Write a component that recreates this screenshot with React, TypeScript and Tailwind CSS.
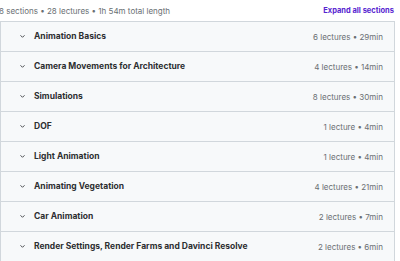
const sections = [
  { title: "Animation Basics", meta: "6 lectures • 29min" },
  { title: "Camera Movements for Architecture", meta: "4 lectures • 14min" },
  { title: "Simulations", meta: "8 lectures • 30min" },
  { title: "DOF", meta: "1 lecture • 4min" },
  { title: "Light Animation", meta: "1 lecture • 4min" },
  { title: "Animating Vegetation", meta: "4 lectures • 21min" },
  { title: "Car Animation", meta: "2 lectures • 7min" },
  { title: "Render Settings, Render Farms and Davinci Resolve", meta: "2 lectures • 6min" },
]

function Chevron() {
  return (
    <svg width="7" height="5" viewBox="0 0 7 5" className="shrink-0">
      <path d="M1.5 1.3 L3.5 3.3 L5.5 1.3" fill="none" stroke="#4a4d50" strokeWidth="1" />
    </svg>
  )
}

export default function App() {
  return (
    <div className="w-[400px] h-[261px] overflow-hidden bg-white font-['Inter',sans-serif] text-[#2d2f31]">
      <div className="flex items-center justify-between h-[21px] pr-[6px] -ml-[1px]">
        <span className="text-[8px] text-[#6a6f73]">8 sections • 28 lectures • 1h 54m total length</span>
        <span className="text-[7.5px] font-bold text-[#5624d0]">Expand all sections</span>
      </div>
      <div className="w-[395px] border border-[#d1d7dc] border-b-0">
        {sections.map((s) => (
          <div
            key={s.title}
            className="flex items-center h-[30px] bg-[#f7f9fa] border-b border-[#d1d7dc] pl-[18px] pr-[11px]"
          >
            <Chevron />
            <span className="ml-[8px] text-[8.5px] font-bold flex-1">{s.title}</span>
            <span className="text-[8px] text-[#6a6f73]">{s.meta}</span>
          </div>
        ))}
      </div>
    </div>
  )
}
